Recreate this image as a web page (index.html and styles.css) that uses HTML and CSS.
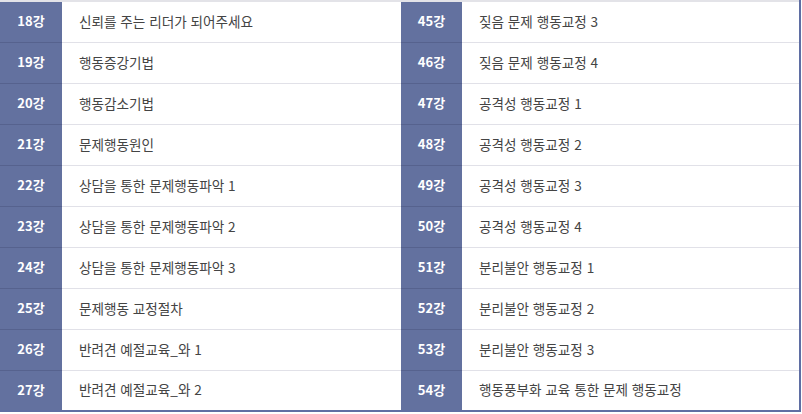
FILE: index.html
```html
<!DOCTYPE html>
<html lang="ko">
<head>
  <meta charset="UTF-8">
  <meta name="viewport" content="width=device-width, initial-scale=1.0">
  <title>커리큘럼</title>
  <link rel="stylesheet" href="styles.css">
</head>
<body>
  <table class="curriculum">
    <colgroup>
      <col class="col-no">
      <col class="col-title">
      <col class="col-no2">
      <col>
    </colgroup>
    <tbody>
      <tr><th>18강</th><td>신뢰를 주는 리더가 되어주세요</td><th>45강</th><td>짖음 문제 행동교정 3</td></tr>
      <tr><th>19강</th><td>행동증강기법</td><th>46강</th><td>짖음 문제 행동교정 4</td></tr>
      <tr><th>20강</th><td>행동감소기법</td><th>47강</th><td>공격성 행동교정 1</td></tr>
      <tr><th>21강</th><td>문제행동원인</td><th>48강</th><td>공격성 행동교정 2</td></tr>
      <tr><th>22강</th><td>상담을 통한 문제행동파악 1</td><th>49강</th><td>공격성 행동교정 3</td></tr>
      <tr><th>23강</th><td>상담을 통한 문제행동파악 2</td><th>50강</th><td>공격성 행동교정 4</td></tr>
      <tr><th>24강</th><td>상담을 통한 문제행동파악 3</td><th>51강</th><td>분리불안 행동교정 1</td></tr>
      <tr><th>25강</th><td>문제행동 교정절차</td><th>52강</th><td>분리불안 행동교정 2</td></tr>
      <tr><th>26강</th><td>반려견 예절교육_와 1</td><th>53강</th><td>분리불안 행동교정 3</td></tr>
      <tr><th>27강</th><td>반려견 예절교육_와 2</td><th>54강</th><td>행동풍부화 교육 통한 문제 행동교정</td></tr>
    </tbody>
  </table>
</body>
</html>
```

FILE: styles.css
```css
html, body {
background-color: #fff;
margin: 0;
padding: 0;
}

.curriculum {
width: 801px;
border-collapse: collapse;
table-layout: fixed;
font-family: "Noto Sans CJK KR", "Noto Sans", sans-serif;
font-size: 13.6px;
border-top: 2px solid #e3e3e8;
border-right: 2px solid #5f6ea3;
border-bottom: 2px solid #5f6ea3;
}

.col-no {
width: 62px;
}

.col-title {
width: 339px;
}

.col-no2 {
width: 61px;
}

.curriculum th,
.curriculum td {
height: 41px;
padding: 0 0 2px 0;
box-sizing: border-box;
border-bottom: 1px solid #e1e1e8;
}

.curriculum th {
background-color: #63719f;
color: #fff;
font-size: 13px;
font-weight: bold;
text-align: center;
border-bottom-color: #56628e;
}

.curriculum td {
color: #444;
text-align: left;
padding-left: 17px;
}

.curriculum tr:last-child th,
.curriculum tr:last-child td {
border-bottom: none;
}
```
